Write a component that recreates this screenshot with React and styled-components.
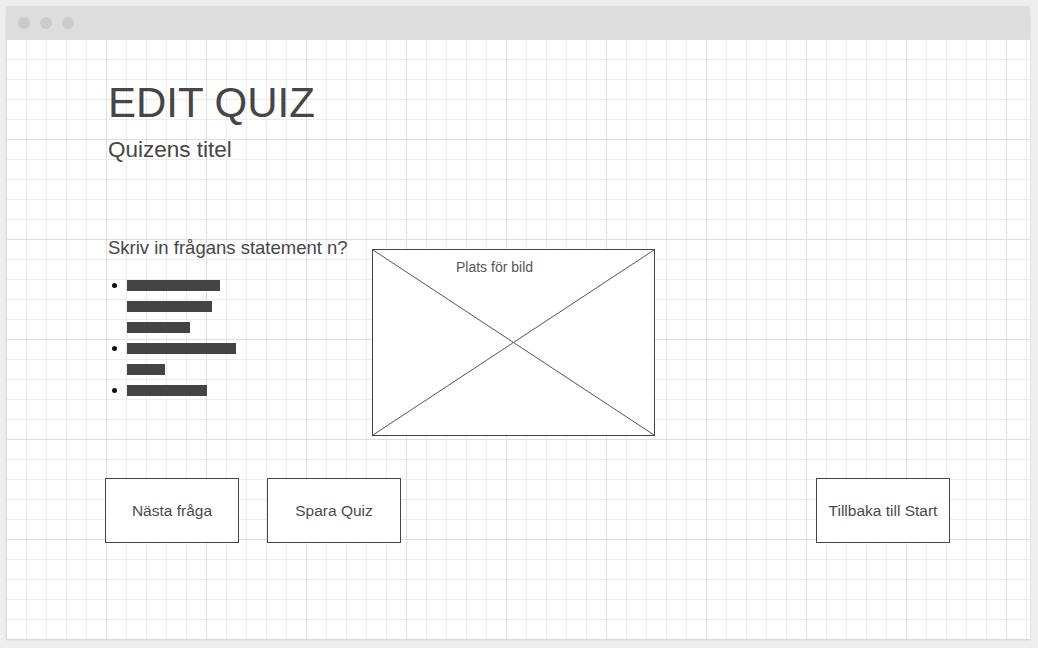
import React from "react";
import styled, { createGlobalStyle } from "styled-components";

const Global = createGlobalStyle`
  html, body { margin: 0; padding: 0; }
  body {
    background: #eeeeee;
    font-family: "Liberation Sans", Arial, sans-serif;
    color: #444;
  }
`;

const Page = styled.div`
  width: 1038px;
  height: 648px;
  padding: 6px 8px 9px 6px;
  box-sizing: border-box;
  display: flex;
`;

const Window = styled.div`
  flex: 1;
  display: flex;
  flex-direction: column;
  border-radius: 4px 4px 0 0;
  overflow: hidden;
  box-shadow: 0 1px 2px rgba(0, 0, 0, 0.12);
`;

const TitleBar = styled.div`
  height: 33px;
  flex: none;
  background: #dddddd;
  display: flex;
  align-items: center;
  gap: 10px;
  padding-left: 12px;
  box-sizing: border-box;
`;

const Dot = styled.span`
  width: 12px;
  height: 12px;
  border-radius: 50%;
  background: #cbcbcb;
`;

const Canvas = styled.main`
  flex: 1;
  background-color: #ffffff;
  background-image:
    linear-gradient(to right, #dfdfdf 1px, transparent 1px),
    linear-gradient(to bottom, #dfdfdf 1px, transparent 1px),
    linear-gradient(to right, #ececec 1px, transparent 1px),
    linear-gradient(to bottom, #ececec 1px, transparent 1px);
  background-size: 100px 100px, 100px 100px, 20px 20px, 20px 20px;
  background-position: 0 0;
  padding: 43px 80px 0 102px;
  display: flex;
  flex-direction: column;
`;

const Title = styled.h1`
  margin: 0;
  font-size: 42px;
  line-height: 41px;
  font-weight: 400;
  color: #464646;
`;

const Subtitle = styled.h2`
  margin: 16px 0 0;
  font-size: 22.5px;
  line-height: 22px;
  font-weight: 400;
  color: #464646;
`;

const QuestionRow = styled.section`
  display: flex;
  align-items: flex-start;
  margin-top: 78px;
`;

const QuestionColumn = styled.div`
  width: 264px;
  flex: none;
`;

const Question = styled.p`
  margin: 0;
  font-size: 18.5px;
  line-height: 18px;
  color: #464646;
`;

const Options = styled.ul`
  list-style: none;
  margin: 18px 0 0;
  padding: 0;
`;

const Option = styled.li`
  position: relative;
  padding-left: 19px;
  &::before {
    content: "";
    position: absolute;
    left: 4px;
    top: 8px;
    width: 5px;
    height: 5px;
    border-radius: 50%;
    background: #111;
  }
`;

const BarLine = styled.div`
  height: 21px;
  display: flex;
  align-items: center;
`;

const Bar = styled.span`
  height: 11px;
  background: #444;
  display: block;
`;

const ImageBox = styled.figure`
  position: relative;
  margin: 10px 0 0;
  width: 283px;
  height: 187px;
  box-sizing: border-box;
  border: 1px solid #444;
  background: #fff;
`;

const Cross = styled.svg`
  position: absolute;
  inset: 0;
  width: 100%;
  height: 100%;
`;

const Caption = styled.figcaption`
  position: relative;
  padding: 10px 0 0 83px;
  font-size: 14px;
  line-height: 14px;
  color: #555;
`;

const ButtonRow = styled.div`
  display: flex;
  gap: 28px;
  margin: 42px 0 0 -3px;
`;

const Button = styled.button`
  width: 134px;
  height: 65px;
  box-sizing: border-box;
  border: 1px solid #444;
  background: #fff;
  font-family: "Liberation Sans", Arial, sans-serif;
  font-size: 15.5px;
  color: #4a4a4a;
  padding: 0;
  margin-left: ${(p) => (p.$right ? "auto" : "0")};
  cursor: pointer;
`;

const options = [[93, 85, 63], [109, 38], [80]];

export default function App() {
  return (
    <>
      <Global />
      <Page>
        <Window>
          <TitleBar>
            <Dot />
            <Dot />
            <Dot />
          </TitleBar>
          <Canvas>
            <Title>EDIT QUIZ</Title>
            <Subtitle>Quizens titel</Subtitle>
            <QuestionRow>
              <QuestionColumn>
                <Question>Skriv in frågans statement n?</Question>
                <Options>
                  {options.map((bars, i) => (
                    <Option key={i}>
                      {bars.map((w, j) => (
                        <BarLine key={j}>
                          <Bar style={{ width: w }} />
                        </BarLine>
                      ))}
                    </Option>
                  ))}
                </Options>
              </QuestionColumn>
              <ImageBox>
                <Cross viewBox="0 0 100 100" preserveAspectRatio="none">
                  <line x1="0" y1="0" x2="100" y2="100" stroke="#555" strokeWidth="1" vectorEffect="non-scaling-stroke" />
                  <line x1="100" y1="0" x2="0" y2="100" stroke="#555" strokeWidth="1" vectorEffect="non-scaling-stroke" />
                </Cross>
                <Caption>Plats för bild</Caption>
              </ImageBox>
            </QuestionRow>
            <ButtonRow>
              <Button>Nästa fråga</Button>
              <Button>Spara Quiz</Button>
              <Button $right>Tillbaka till Start</Button>
            </ButtonRow>
          </Canvas>
        </Window>
      </Page>
    </>
  );
}
